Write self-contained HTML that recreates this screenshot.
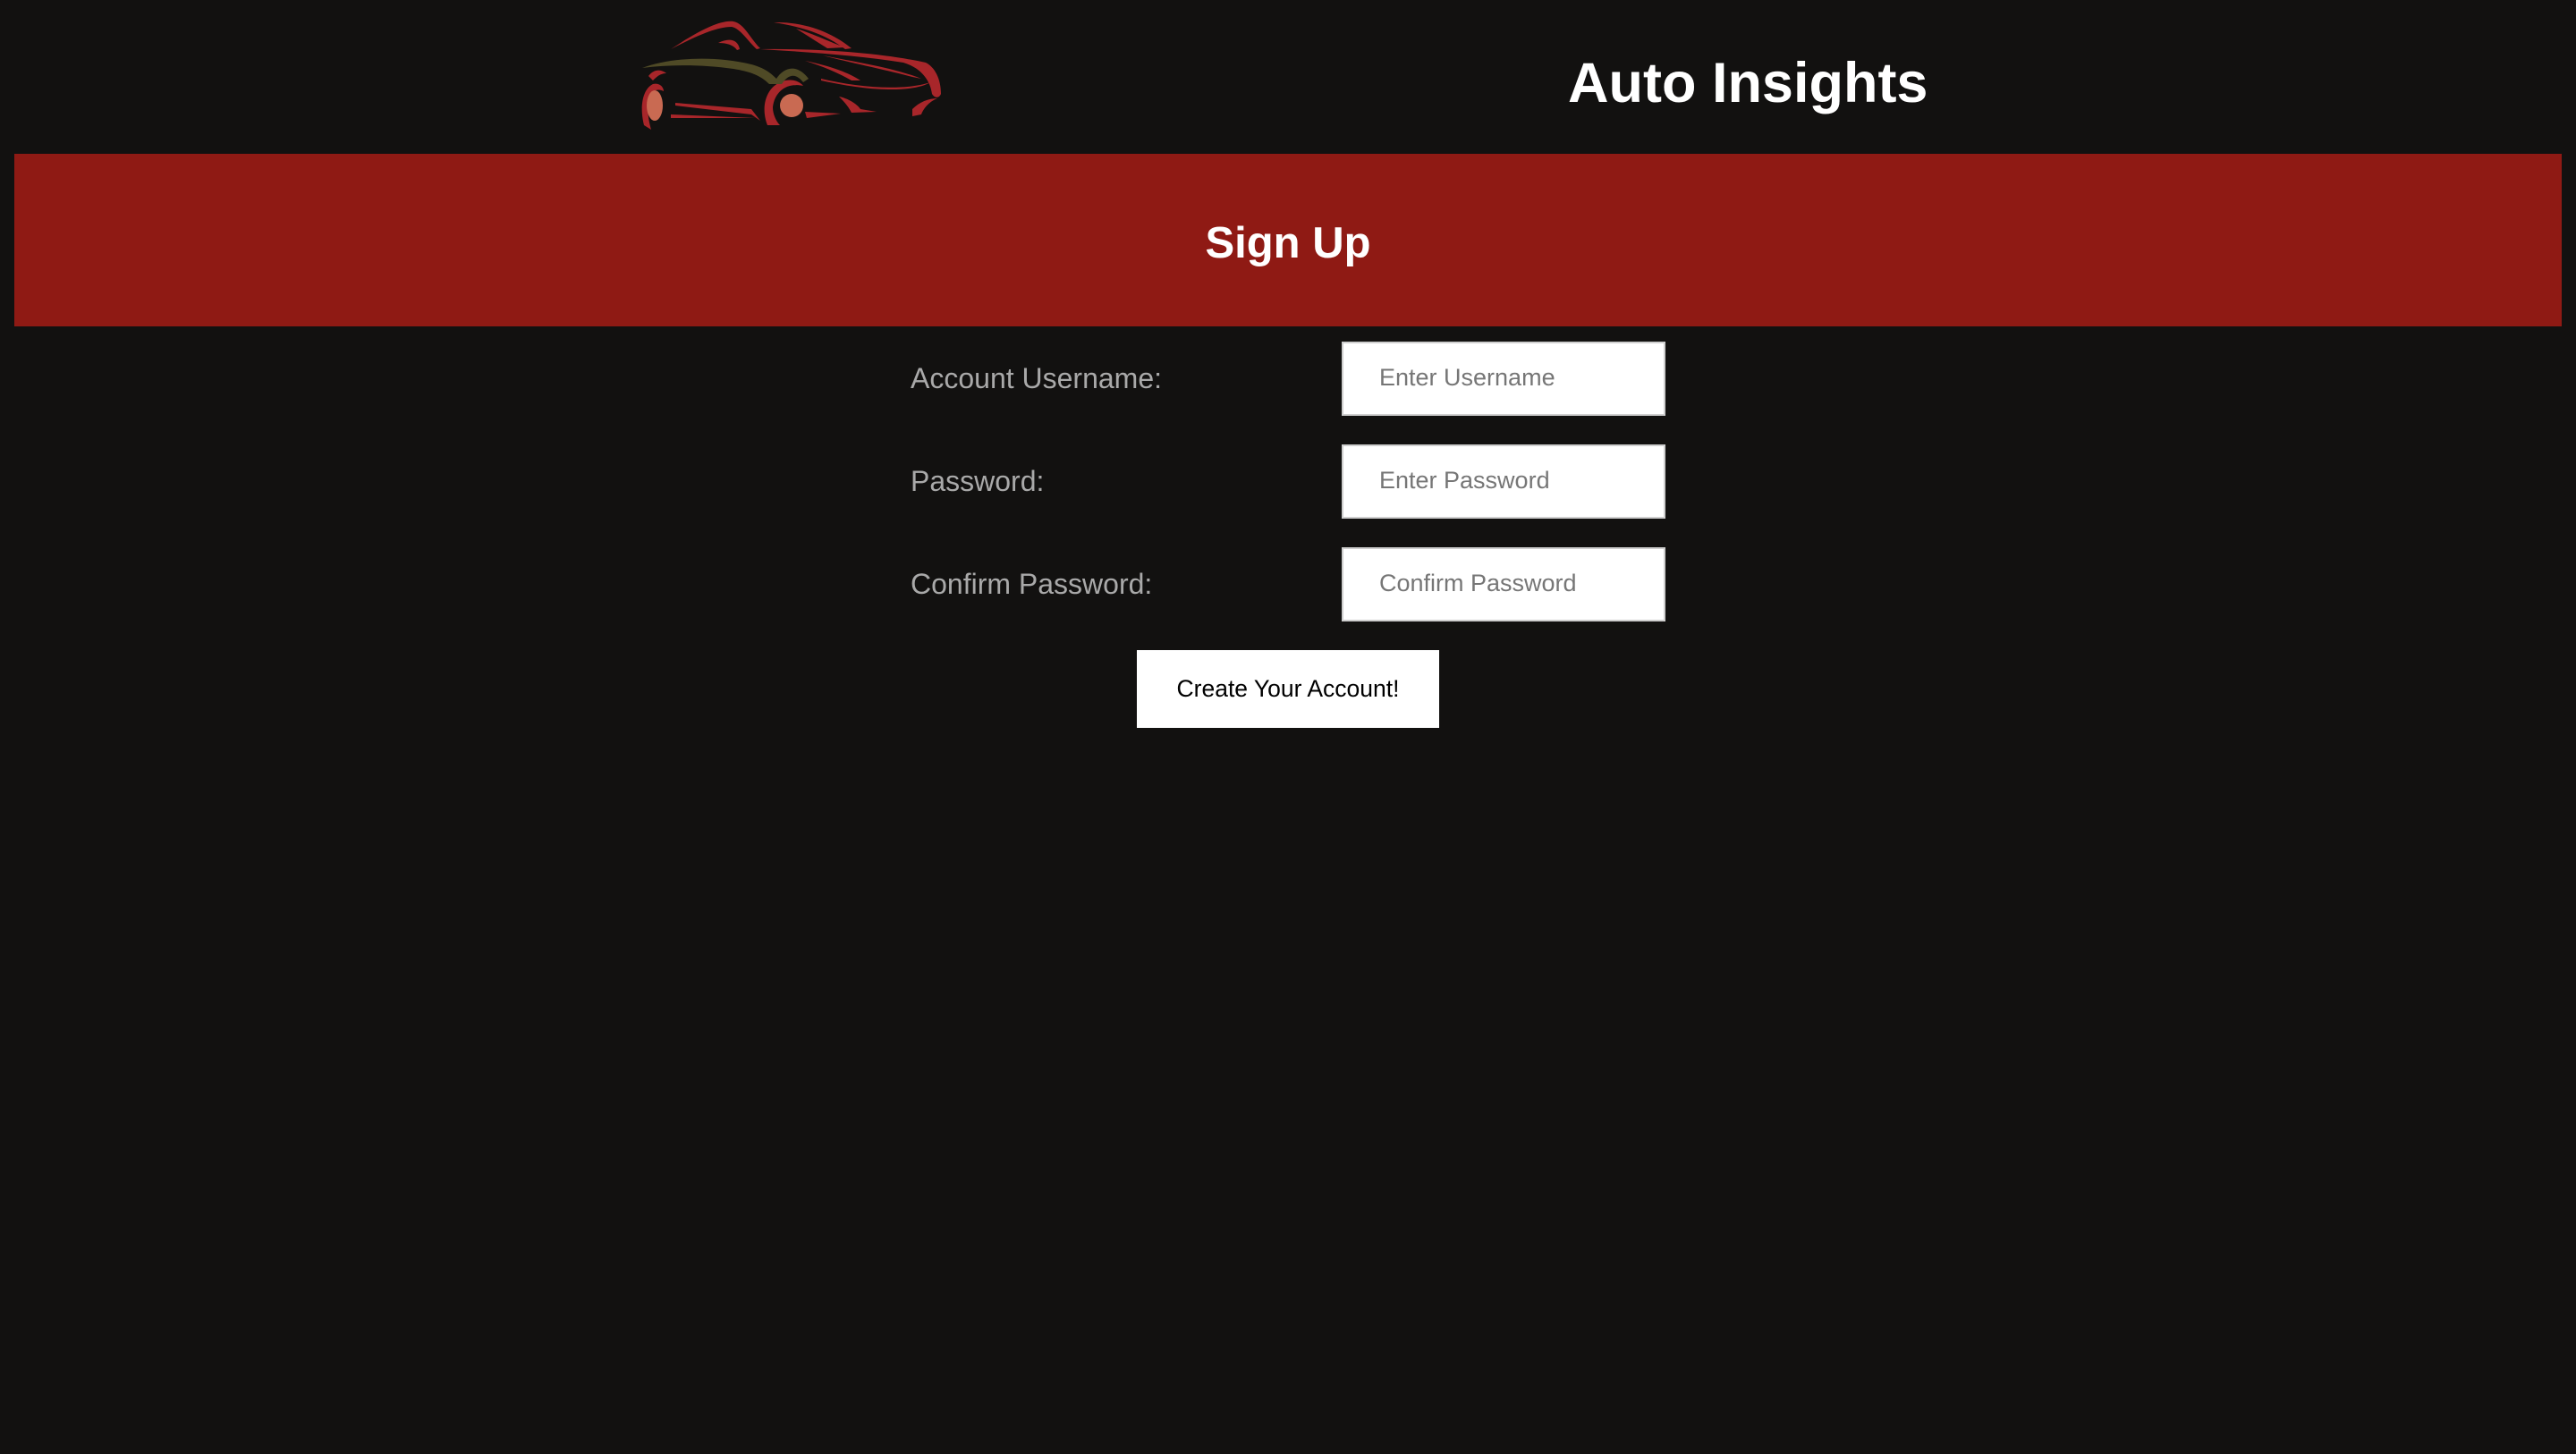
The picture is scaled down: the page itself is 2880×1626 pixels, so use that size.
<!DOCTYPE html>
<html><head><meta charset="utf-8"><style>
html,body{margin:0;padding:0;background:#121110;width:2880px;height:1626px;overflow:hidden;font-family:"Liberation Sans",Arial,sans-serif}
.abs{position:absolute}
.title{left:1753px;top:53px;font-size:63px;font-weight:bold;color:#fff;white-space:nowrap;line-height:80px}
.banner{left:16px;top:172px;width:2848px;height:193px;background:#8f1a14}
.banner div{position:absolute;left:0;right:0;top:4px;line-height:193px;text-align:center;color:#fff;font-weight:bold;font-size:49px}
.lab{left:1018px;font-size:32px;color:#a9a9a9;line-height:40px}
.inp{left:1500px;width:358px;height:79px;background:#fff;border:2px solid #cfcfcf}
.inp span{position:absolute;left:40px;top:-1px;line-height:79px;font-size:27px;color:#767676}
.btn{left:1271px;top:727px;width:338px;height:87px;background:#fff;text-align:center;line-height:87px;font-size:26.5px;color:#000}
</style></head><body>
<svg class="abs" style="left:690px;top:10px" width="390" height="150" viewBox="0 0 390 150">
<g fill="#a8262a">
<path d="M60 45 C90 25 115 12 130 14 C142 16 150 35 160 44 L156 45 C146 36 138 22 128 20 C110 20 85 32 60 45Z"/>
<path d="M113 38 C125 32 135 34 137 45 L134 46 C130 40 122 38 113 38Z"/>
<path d="M175 15 C215 14 245 30 262 44 L255 45 C240 34 220 22 175 15Z"/>
<path d="M200 22 C220 28 240 38 255 43 L235 44 C222 36 210 28 200 22Z"/>
<path d="M160 45 C230 44 300 50 345 60 C355 65 362 78 362 95 C360 100 355 100 352 95 C350 80 340 66 320 60 C270 52 210 48 160 45Z"/>
<path d="M230 52 C270 60 310 66 340 78 L330 76 C300 68 260 60 230 52Z"/>
<path d="M210 58 C240 64 260 72 272 80 L262 80 C248 72 230 64 210 58Z"/>
<path d="M228 78 C270 88 320 92 350 82 C338 90 300 96 228 80Z"/>
<path d="M248 98 C258 100 268 106 272 112 L290 115 L262 116 C258 108 252 102 248 98Z"/>
<path d="M330 112 C338 104 348 100 358 100 C348 104 342 112 340 118 L330 120Z"/>
<path d="M210 115 L250 117 L212 122Z"/>
<path d="M65 105 L150 112 L160 125 L150 118 L65 108Z"/>
<path d="M60 118 L155 122 L60 122Z"/>
<path d="M35 75 C42 66 50 68 55 72 C48 72 44 76 40 80Z"/>
<path d="M30 130 C25 110 28 90 40 84 C48 82 52 88 52 92 C44 88 36 92 34 108 C34 118 36 128 38 135Z"/>
<path d="M168 130 C160 110 166 85 188 80 C198 78 205 82 208 86 C190 82 176 92 174 110 C174 118 178 126 182 130Z"/>
</g>
<path d="M28 66 C60 54 110 52 150 62 C165 66 172 72 178 78 C186 66 200 60 214 78 L208 82 C200 72 192 72 184 84 L170 84 C160 74 148 70 130 67 C95 62 60 62 28 66Z" fill="#4f4a26"/>
<ellipse cx="42" cy="108" rx="9" ry="17" fill="#c96a52"/>
<circle cx="195" cy="108" r="13" fill="#c96a52"/>
</svg>
<div class="abs title">Auto Insights</div>
<div class="abs banner"><div>Sign Up</div></div>
<div class="abs lab" style="top:403px">Account Username:</div>
<div class="abs lab" style="top:518px">Password:</div>
<div class="abs lab" style="top:633px">Confirm Password:</div>
<div class="abs inp" style="top:382px"><span>Enter Username</span></div>
<div class="abs inp" style="top:497px"><span>Enter Password</span></div>
<div class="abs inp" style="top:612px"><span>Confirm Password</span></div>
<div class="abs btn">Create Your Account!</div>
</body></html>
